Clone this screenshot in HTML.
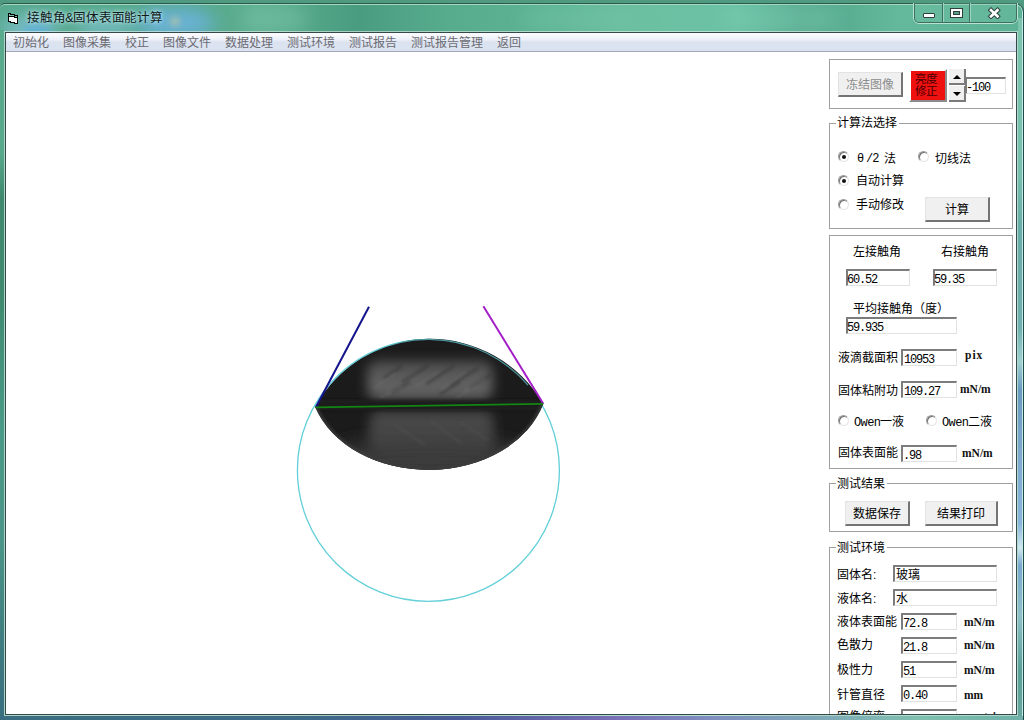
<!DOCTYPE html>
<html lang="zh-CN">
<head>
<meta charset="utf-8">
<style>
*{margin:0;padding:0;box-sizing:border-box}
html,body{width:1024px;height:720px;overflow:hidden;background:#4f9a80;font-family:"Liberation Sans",sans-serif;font-size:12px;color:#000}
.abs{position:absolute}
#frame{position:absolute;left:0;top:3px;width:1024px;height:717px;
 background:linear-gradient(90deg,#56a88c 0%,#58aa8c 20%,#5cae90 25%,#55a88a 29%,#4a9c80 35%,#58ac8e 44%,#5eb496 55%,#6cc0a2 63%,#6cc2a6 72%,#58aa90 78%,#5aae92 83%,#64b89c 88%,#5cb094 100%);
 border-top:1px solid #2b5a48;border-right:1px solid #1f4848;box-shadow:inset 0 1px 0 #a3d9c2,inset -1px 0 0 #c4ece6;border-radius:5px 9px 0 0;overflow:hidden}
#frame .hl{position:absolute;left:3px;right:3px;top:0;height:1px;background:#a3d9c2}
#client{position:absolute;left:6px;top:33px;width:1010px;height:681px;background:#fff;overflow:hidden}
#cborder{position:absolute;left:5px;top:32px;width:1012px;height:683px;border:1px solid #34484a}
#cborder2{position:absolute;left:4px;top:31px;width:1014px;height:685px;border:1px solid rgba(255,255,255,.5)}
.menu{position:absolute;left:0;top:0;width:1010px;height:19px;border-bottom:1px solid #a4a8b4;
 background:linear-gradient(#fcfcfe 0%,#eef1f8 35%,#dce3f0 50%,#dbe2f1 100%)}
.menu span{position:absolute;top:3px;color:#6b6b72;font-size:12px;line-height:14px}
.gb{position:absolute;border:1px solid #a0a0a0}
.gt{position:absolute;background:#fff;padding:0 2px 0 1px;line-height:13px;margin-top:1px}
.t{position:absolute;line-height:13px;white-space:nowrap;margin-top:1px}
.ed{position:absolute;background:#fff;border-top:2px solid #7c7c7c;border-left:2px solid #7c7c7c;border-right:1px solid #e2e2e2;border-bottom:1px solid #e2e2e2}
.ed span{position:absolute;left:0px;top:3px;font-family:"Liberation Mono",monospace;font-size:12px;letter-spacing:-1.2px;line-height:13px}
.btn{position:absolute;background:#f0f0f0;border-top:1px solid #e2e2e2;border-left:1px solid #e2e2e2;border-right:2px solid #747474;border-bottom:2px solid #747474;text-align:center}
.rd{position:absolute;width:11px;height:11px;border-radius:50%;background:#fff;border:1px solid;border-color:#9a9a9a #e6e6e6 #e6e6e6 #9a9a9a;box-shadow:inset 1px 1px 0 #6e6e6e}
.rd.on::after{content:"";position:absolute;left:3px;top:3px;width:4px;height:4px;border-radius:50%;background:#111}
.u{position:absolute;font-family:"Liberation Serif",serif;font-weight:bold;font-size:11.5px;line-height:13px;margin-top:2px;color:#111}

#panel{position:absolute;left:0;top:0;width:1016px;height:714px;overflow:hidden}
#clipwrap{position:absolute;left:6px;top:33px;width:1010px;height:681px;overflow:hidden}
.btn span{position:absolute;left:0;right:0;top:50%;margin-top:-5px;line-height:13px}
.btn.dis span{color:#8d8d8d}
.btn.red{background:#ef1010;border-top:2px solid #fff;border-left:2px solid #fff;border-right:2px solid #8c8c8c;border-bottom:2px solid #8c8c8c}
.btn.red span{position:absolute;left:4px;right:auto;margin:0;color:#4a0000;font-size:11.5px;line-height:12px;letter-spacing:0}
.btn.red .r1{top:2px}.btn.red .r2{top:13.5px}
.spin{position:absolute;background:#f0f0f0;border-right:2px solid #7a7a7a;border-bottom:2px solid #7a7a7a}
.spin i{position:absolute;left:4px;width:0;height:0;border-left:4px solid transparent;border-right:4px solid transparent}
.spin i.up{top:6px;border-bottom:4px solid #000}
.spin i.dn{top:6px;border-top:4px solid #000}
.ed span.c{font-family:"Liberation Sans",sans-serif;letter-spacing:0;top:2px;left:1px}
.m{font-family:"Liberation Mono",monospace;letter-spacing:-1px}

.glow{position:absolute;border-radius:50%;filter:blur(9px)}
#frame .lf{position:absolute;left:0;top:26px;width:4px;bottom:0;background:linear-gradient(#5aab8e 0%,#58a88c 18%,#3f8a6e 24%,#3f8a6e 38%,#4a9a88 58%,#4a9488 75%,#3f7a80 90%,#3a6e80 100%)}
#frame .rf{position:absolute;right:1px;top:14px;width:4px;bottom:0;background:linear-gradient(#7cc4ac 0%,#78c0ae 22%,#6aaca8 30%,#70b0b0 44%,#a0d0d0 49%,#6a9ac0 53%,#80a8d0 62%,#8ab4dc 72%,#d0e8f0 75.5%,#7aa8d0 78%,#90c0c8 85%,#5aa098 93%,#6aa8a0 100%)}
#frame .bf{position:absolute;left:0;right:0;bottom:0;height:4px;background:linear-gradient(90deg,#3a6e80 0%,#3f6a88 30%,#4a5a98 45%,#7a70b8 60%,#8090c0 70%,#80c0b0 90%,#70b0a8 100%)}
.title{left:27px;top:11px;font-size:12.5px;letter-spacing:-0.25px;line-height:14px;color:#0d1a18;text-shadow:0 0 6px rgba(200,240,255,.9),0 0 3px rgba(220,250,255,.8)}
.capgrp{position:absolute;left:914px;top:3px;width:103px;height:20px;border:1px solid #3d6e5e;border-top:none;border-radius:0 0 5px 5px;box-shadow:0 1px 0 #b8e4d2,-1px 0 0 #b8e4d2,1px 0 0 #b8e4d2;background:rgba(120,200,170,.25)}
.capgrp .div1{position:absolute;left:27px;top:0;width:1px;height:19px;background:#3d6e5e;box-shadow:1px 0 0 #9cd6c0}
.capgrp .div2{position:absolute;left:54px;top:0;width:1px;height:19px;background:#3d6e5e;box-shadow:1px 0 0 #9cd6c0}
.capgrp .gmin{position:absolute;left:8px;top:10px;width:12px;height:5px;background:#fff;border:1px solid #2f3f3c;border-radius:1px}
.capgrp .gmax{position:absolute;left:36px;top:6px;width:11px;height:8px;background:#5a9a88;border:2px solid #fff;outline:1px solid #2f3f3c;box-shadow:inset 0 0 0 1px #2f3f3c}
</style>
</head>
<body>
<div id="frame">
  <div class="glow" style="left:0px;top:12px;width:60px;height:26px;background:rgba(150,205,235,.6)"></div>
  <div class="glow" style="left:22px;top:20px;width:30px;height:14px;background:rgba(80,170,230,.6);filter:blur(5px)"></div>
  <div class="glow" style="left:75px;top:14px;width:60px;height:22px;background:rgba(140,200,235,.55)"></div>
  <div class="glow" style="left:135px;top:4px;width:80px;height:30px;background:rgba(110,180,235,.8)"></div>
  <div class="glow" style="left:170px;top:13px;width:10px;height:9px;background:rgba(220,205,150,.55);filter:blur(3px)"></div>
  <div class="glow" style="left:240px;top:0px;width:70px;height:30px;background:rgba(140,210,180,.35)"></div>
  <div class="glow" style="left:520px;top:0px;width:120px;height:30px;background:rgba(130,205,175,.3)"></div>
  <div class="glow" style="left:720px;top:0px;width:120px;height:30px;background:rgba(130,210,180,.35)"></div>
  <div class="lf"></div><div class="rf"></div><div class="bf"></div>
  
</div>
<svg class="abs" style="left:0;top:0" width="30" height="30" viewBox="0 0 30 30" shape-rendering="crispEdges">
  <path d="M8.5 13.5H10.5V14.5H14.5V15.5H17.5V23.5H14.5V22.5H10.5V21.5H8.5Z" fill="#fff" stroke="#000"/>
  <path d="M9 14H10V15H14V16H17V17H14V16.5H10V16H9Z" fill="#7cc0b0"/>
  <path d="M9 16.5H14V17.5H17" stroke="#000" fill="none"/>
</svg>
<div class="abs title">接触角&amp;固体表面能计算</div>
<div class="capgrp">
  <div class="div1"></div><div class="div2"></div>
  <div class="gmin"></div>
  <div class="gmax"></div>
  <svg class="abs" style="left:72px;top:4px" width="14" height="12" viewBox="0 0 14 12">
    <path d="M4 3.2L10.5 9.3M10.5 3.2L4 9.3" stroke="#2f3f3c" stroke-width="4.6" stroke-linecap="square"/>
    <path d="M4 3.2L10.5 9.3M10.5 3.2L4 9.3" stroke="#fff" stroke-width="2.6" stroke-linecap="square"/>
  </svg>
</div>

<div id="cborder2"></div>
<div id="cborder"></div>
<div id="client">
  <div class="menu">
    <span style="left:7px">初始化</span>
    <span style="left:57px">图像采集</span>
    <span style="left:119px">校正</span>
    <span style="left:157px">图像文件</span>
    <span style="left:219px">数据处理</span>
    <span style="left:281px">测试环境</span>
    <span style="left:343px">测试报告</span>
    <span style="left:405px">测试报告管理</span>
    <span style="left:491px">返回</span>
  </div>
</div>


<svg class="abs" style="left:0;top:0" width="820" height="714" viewBox="0 0 820 714">
  <defs>
    <clipPath id="lens"><path d="M315.2 406.9 A131 131 0 0 1 543.2 403.8 A119 90.5 0 0 1 315.2 406.9Z"/></clipPath>
    <filter id="bl" x="-50%" y="-50%" width="200%" height="200%"><feGaussianBlur stdDeviation="10"/></filter>
    <filter id="bl3" x="-50%" y="-50%" width="200%" height="200%"><feGaussianBlur stdDeviation="6"/></filter>
    <filter id="bl2" x="-50%" y="-50%" width="200%" height="200%"><feGaussianBlur stdDeviation="1.6"/></filter>
    <linearGradient id="ug" x1="0" y1="0" x2="0" y2="1">
      <stop offset="0" stop-color="#4a4a4a"/><stop offset="0.6" stop-color="#626262"/><stop offset="1" stop-color="#5e5e5e"/>
    </linearGradient>
    <linearGradient id="lg" x1="0" y1="0" x2="0" y2="1">
      <stop offset="0" stop-color="#4a4a4a"/><stop offset="1" stop-color="#3e3e3e"/>
    </linearGradient>
  </defs>
  <circle cx="428.4" cy="470.3" r="131" fill="none" stroke="#62cfd9" stroke-width="1.3"/>
  <g clip-path="url(#lens)">
    <rect x="300" y="330" width="260" height="150" fill="#1b1b1b"/>
    <ellipse cx="429" cy="462" rx="110" ry="22" fill="#3a3a3a" filter="url(#bl)"/>
    <rect x="367" y="360" width="126" height="40" rx="12" fill="url(#ug)" filter="url(#bl3)"/>
    <rect x="369" y="411" width="125" height="43" rx="12" fill="url(#lg)" filter="url(#bl3)"/>
    <g filter="url(#bl2)" stroke="#2e2e2e" stroke-width="2.2" opacity=".55">
      <path d="M384 378L402 366M402 382L428 366M426 384L454 366M450 386L478 368M470 388L490 375M392 392L410 382M440 394L460 382"/>
    </g>
    <g filter="url(#bl2)" stroke="#727272" stroke-width="1.6" opacity=".45">
      <path d="M374 388L396 373M414 388L440 371M440 390L466 372M462 392L486 378M380 398L402 386M456 398L478 386"/>
    </g>
    <g filter="url(#bl2)" stroke="#555" stroke-width="2" opacity=".5">
      <path d="M395 425L425 445M430 420L462 444M460 422L488 440"/>
    </g>
    <rect x="300" y="400" width="260" height="10" fill="#1a1a1a" filter="url(#bl2)"/>
    <path d="M543.2 403.8 A119 90.5 0 0 1 315.2 406.9" fill="none" stroke="#3c3c3c" stroke-width="5" filter="url(#bl2)" opacity=".8"/>
  </g>
  <path d="M330.0 383.8A131 131 0 0 1 528.0 385.2" fill="none" stroke="#62cfd9" stroke-width="1.2" opacity=".7"/>
  <path d="M369 306.8L316 407" stroke="#14148c" stroke-width="2"/>
  <path d="M483.4 306.3L543.3 403.8" stroke="#a41ec8" stroke-width="2"/>
  <path d="M315.5 407.3L543.3 403.8" stroke="#128512" stroke-width="1.8"/>
</svg>
<div id="panel">
  <!-- G1 -->
  <div class="gb" style="left:829px;top:59px;width:184px;height:50px"></div>
  <div class="btn dis" style="left:838px;top:72px;width:65px;height:25px"><span>冻结图像</span></div>
  <div class="btn red" style="left:909px;top:69px;width:38px;height:33px"><span class="r1">亮度</span><span class="r2">修正</span></div>
  <div class="spin" style="left:949px;top:69px;width:17px;height:16px"><i class="up"></i></div>
  <div class="spin" style="left:949px;top:86px;width:17px;height:16px"><i class="dn"></i></div>
  <div class="ed" style="left:965px;top:77px;width:41px;height:17px"><span style="left:-1px">-100</span></div>
  <!-- G2 -->
  <div class="gb" style="left:829px;top:123px;width:184px;height:106px"></div>
  <div class="gt" style="left:836px;top:116px">计算法选择</div>
  <div class="rd on" style="left:838px;top:151px"></div><div class="t m" style="left:857px;top:152px;letter-spacing:0">θ</div><div class="t m" style="left:866px;top:152px;letter-spacing:-1px">/2</div><div class="t" style="left:884px;top:152px">法</div>
  <div class="rd" style="left:918px;top:151px"></div><div class="t" style="left:935px;top:152px">切线法</div>
  <div class="rd on" style="left:838px;top:175px"></div><div class="t" style="left:856px;top:174px">自动计算</div>
  <div class="rd" style="left:838px;top:199px"></div><div class="t" style="left:856px;top:198px">手动修改</div>
  <div class="btn" style="left:925px;top:197px;width:65px;height:25px"><span>计算</span></div>
  <!-- G3 -->
  <div class="gb" style="left:829px;top:235px;width:184px;height:234px"></div>
  <div class="t" style="left:853px;top:245px">左接触角</div>
  <div class="t" style="left:941px;top:245px">右接触角</div>
  <div class="ed" style="left:846px;top:269px;width:64px;height:17px"><span style="left:-1px">60.52</span></div>
  <div class="ed" style="left:933px;top:269px;width:64px;height:17px"><span style="left:-1px">59.35</span></div>
  <div class="t" style="left:853px;top:302px">平均接触角（度）</div>
  <div class="ed" style="left:846px;top:317px;width:111px;height:17px"><span style="left:-1px">59.935</span></div>
  <div class="t" style="left:838px;top:351px">液滴截面积</div>
  <div class="ed" style="left:901px;top:349px;width:56px;height:17px"><span style="left:1px">10953</span></div>
  <div class="u" style="left:965px;top:347px;letter-spacing:1px">pix</div>
  <div class="t" style="left:838px;top:384px">固体粘附功</div>
  <div class="ed" style="left:901px;top:381px;width:56px;height:17px"><span style="left:1px">109.27</span></div>
  <div class="u" style="left:960px;top:381px">mN/m</div>
  <div class="rd" style="left:838px;top:415px"></div><div class="t" style="left:854px;top:415px"><span class="m" style="letter-spacing:-0.6px">Owen</span>一液</div>
  <div class="rd" style="left:926px;top:415px"></div><div class="t" style="left:942px;top:415px"><span class="m" style="letter-spacing:-0.6px">Owen</span>二液</div>
  <div class="t" style="left:838px;top:446px">固体表面能</div>
  <div class="ed" style="left:901px;top:445px;width:56px;height:17px"><span>.98</span></div>
  <div class="u" style="left:962px;top:445px">mN/m</div>
  <!-- G4 -->
  <div class="gb" style="left:829px;top:483px;width:184px;height:49px"></div>
  <div class="gt" style="left:836px;top:477px">测试结果</div>
  <div class="btn" style="left:845px;top:501px;width:65px;height:25px"><span>数据保存</span></div>
  <div class="btn" style="left:925px;top:501px;width:73px;height:25px"><span>结果打印</span></div>
  <!-- G5 -->
  <div class="gb" style="left:829px;top:547px;width:184px;height:200px"></div>
  <div class="gt" style="left:836px;top:541px">测试环境</div>
  <div class="t" style="left:837px;top:568px">固体名:</div>
  <div class="ed" style="left:893px;top:565px;width:104px;height:17px"><span class="c">玻璃</span></div>
  <div class="t" style="left:837px;top:592px">液体名:</div>
  <div class="ed" style="left:893px;top:589px;width:104px;height:17px"><span class="c">水</span></div>
  <div class="t" style="left:837px;top:615px">液体表面能</div>
  <div class="ed" style="left:901px;top:613px;width:56px;height:17px"><span>72.8</span></div>
  <div class="u" style="left:964px;top:614px">mN/m</div>
  <div class="t" style="left:837px;top:638px">色散力</div>
  <div class="ed" style="left:901px;top:637px;width:56px;height:17px"><span>21.8</span></div>
  <div class="u" style="left:964px;top:637px">mN/m</div>
  <div class="t" style="left:837px;top:663px">极性力</div>
  <div class="ed" style="left:901px;top:661px;width:56px;height:17px"><span>51</span></div>
  <div class="u" style="left:964px;top:662px">mN/m</div>
  <div class="t" style="left:837px;top:688px">针管直径</div>
  <div class="ed" style="left:901px;top:685px;width:56px;height:17px"><span>0.40</span></div>
  <div class="u" style="left:964px;top:687px">mm</div>
  <div class="t" style="left:837px;top:710px">图像倍率</div>
  <div class="ed" style="left:901px;top:709px;width:56px;height:17px"><span></span></div>
  <div class="u" style="left:964px;top:709px">mm/pix</div>
</div>
</body>
</html>
